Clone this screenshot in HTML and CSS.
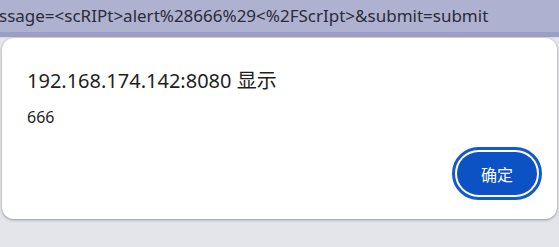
FILE: index.html
```html
<!DOCTYPE html>
<html>
<head>
<meta charset="utf-8">
<link rel="stylesheet" href="styles.css">
</head>
<body>
<div class="urlbar"><span class="url">ssage=&lt;scRIPt&gt;alert%28666%29&lt;%2FScrIpt&gt;&amp;submit=submit</span></div>
<div class="band"></div>
<div class="dialog">
  <div class="title">192.168.174.142:8080 显示</div>
  <div class="message">666</div>
  <div class="actions"><button class="ok">确定</button></div>
</div>
</body>
</html>
```
FILE: styles.css
```css
html, body {
  margin: 0;
  padding: 0;
  width: 559px;
  height: 247px;
  overflow: hidden;
  background: #e4e5ea;
  font-family: "Noto Sans", "Noto Sans CJK SC", sans-serif;
}
.urlbar {
  height: 32px;
  background: #aeb1d0;
  color: #2b2b3a;
  font-size: 17px;
  line-height: 31px;
  white-space: nowrap;
  overflow: hidden;
}
.url {
  margin-left: -1px;
}
.band {
  height: 5px;
  background: #9c9ec7;
  border-bottom: 1px solid #d6d7e0;
}
.dialog {
  margin: 0 2px;
  height: 181px;
  box-sizing: border-box;
  background: #ffffff;
  border-radius: 12px;
  box-shadow: 0 1px 3px rgba(0,0,0,0.35);
  padding: 29px 15px 0 25px;
  display: flex;
  flex-direction: column;
}
.title {
  font-size: 20px;
  line-height: 28px;
  color: #1f1f1f;
}
.message {
  margin-top: 12px;
  font-size: 16px;
  line-height: 20px;
  color: #1f1f1f;
}
.actions {
  display: flex;
  justify-content: flex-end;
  margin-top: 25px;
}
.ok {
  width: 80px;
  height: 43px;
  border: none;
  border-radius: 22px;
  background: #0c52c4;
  color: #ffffff;
  font-family: "Noto Sans CJK SC", sans-serif;
  font-size: 16px;
  outline: 3px solid #1359cc;
  outline-offset: 2px;
  margin-right: 5px;
  padding: 0;
}
```
